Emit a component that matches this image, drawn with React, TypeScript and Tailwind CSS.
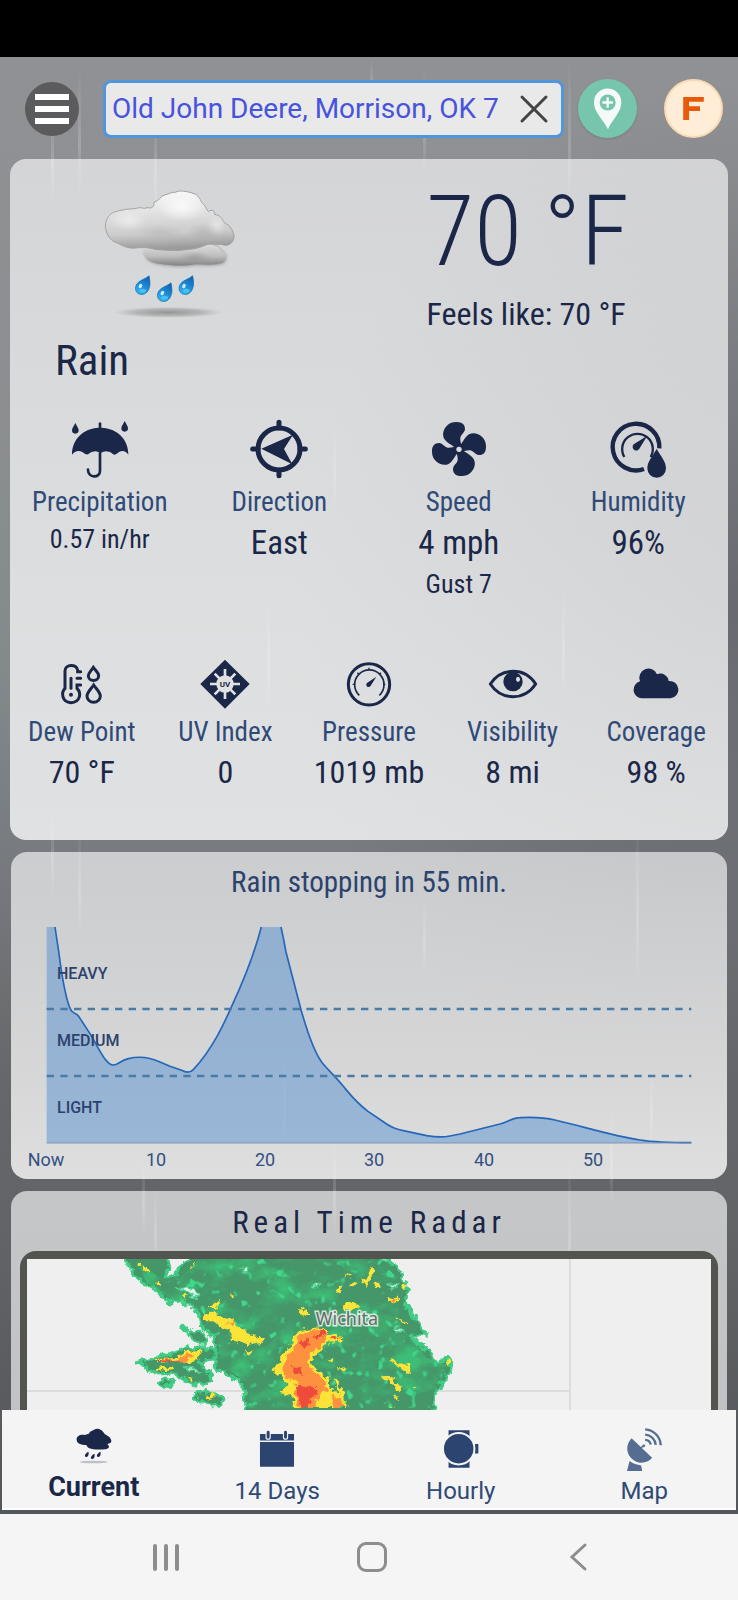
import type { ReactNode } from "react";

const condensed = "font-['Roboto_Condensed','Liberation_Sans_Narrow',Roboto,sans-serif]";

const streaks = [
  { x: 52, y: 40, h: 110 },
  { x: 79, y: 10, h: 130 },
  { x: 155, y: 50, h: 110 },
  { x: 371, y: 0, h: 60 },
  { x: 424, y: 10, h: 110 },
  { x: 569, y: 0, h: 150 },
  { x: 334, y: 370, h: 80 },
  { x: 268, y: 540, h: 110 },
  { x: 563, y: 530, h: 110 },
  { x: 52, y: 750, h: 90 },
  { x: 79, y: 770, h: 110 },
  { x: 637, y: 760, h: 170 },
  { x: 424, y: 840, h: 80 },
  { x: 284, y: 1000, h: 90 },
  { x: 651, y: 1010, h: 80 },
  { x: 143, y: 1100, h: 80 },
  { x: 155, y: 1130, h: 80 },
  { x: 334, y: 1080, h: 100 },
  { x: 569, y: 1090, h: 180 },
  { x: 611, y: 1050, h: 100 },
];

function RainBackdrop() {
  return (
    <div className="absolute inset-0 overflow-hidden bg-[linear-gradient(180deg,#909195_0%,#8b8f92_25%,#84898c_42%,#777b7f_55%,#66676a_70%,#626467_80%,#53565a_100%)]">
      <div className="absolute inset-0 bg-[radial-gradient(ellipse_60%_36%_at_100%_38%,#57585da6,#57585d00)]" />
      <svg className="absolute inset-0 h-full w-full" aria-hidden="true">
        <defs>
          <linearGradient id="streak" x1="0" y1="0" x2="0" y2="1">
            <stop offset="0" stopColor="#fff" stopOpacity="0" />
            <stop offset="0.6" stopColor="#fff" stopOpacity="0.18" />
            <stop offset="1" stopColor="#fff" stopOpacity="0" />
          </linearGradient>
        </defs>
        {streaks.map((s) => (
          <rect key={`${s.x}-${s.y}`} x={s.x - 1} y={s.y} width="3" height={s.h} fill="url(#streak)" />
        ))}
      </svg>
    </div>
  );
}

function RainCloud() {
  return (
    <svg viewBox="300 410 420 400" className="h-[133px] w-[140px]" aria-hidden="true">
      <defs>
        <linearGradient id="cloudTop" x1="0" y1="0" x2="0.1" y2="1">
          <stop offset="0" stopColor="#fbfbfb" />
          <stop offset="0.45" stopColor="#dedede" />
          <stop offset="0.75" stopColor="#cbcbcb" />
          <stop offset="1" stopColor="#9a9a9a" />
        </linearGradient>
        <linearGradient id="cloudLow" x1="0" y1="0" x2="0" y2="1">
          <stop offset="0" stopColor="#dcdcdc" />
          <stop offset="0.55" stopColor="#bdbdbd" />
          <stop offset="1" stopColor="#838383" />
        </linearGradient>
        <radialGradient id="puff">
          <stop offset="0" stopColor="#fff" stopOpacity="0.8" />
          <stop offset="1" stopColor="#fff" stopOpacity="0" />
        </radialGradient>
        <radialGradient id="shade">
          <stop offset="0" stopColor="#8e8e8e" stopOpacity="0.55" />
          <stop offset="1" stopColor="#8e8e8e" stopOpacity="0" />
        </radialGradient>
        <radialGradient id="ground">
          <stop offset="0" stopColor="#777" stopOpacity="0.7" />
          <stop offset="0.6" stopColor="#888" stopOpacity="0.45" />
          <stop offset="1" stopColor="#999" stopOpacity="0" />
        </radialGradient>
        <linearGradient id="drop" x1="0.8" y1="0" x2="0.3" y2="1">
          <stop offset="0" stopColor="#0d5fae" />
          <stop offset="0.5" stopColor="#1e88d2" />
          <stop offset="1" stopColor="#2fb4ee" />
        </linearGradient>
        <filter id="soft" x="-10%" y="-10%" width="120%" height="120%">
          <feGaussianBlur stdDeviation="5" />
        </filter>
      </defs>
      <ellipse cx="505" cy="787" rx="165" ry="17" fill="url(#ground)" />
      <path
        d="M432 604C434 628 452 640 480 644C520 652 560 650 590 645C620 646 655 648 672 640C684 628 682 612 668 604C655 586 640 582 622 584C590 596 560 600 540 598Z"
        fill="#666"
        opacity=".5"
        filter="url(#soft)"
      />
      <path
        d="M432 600C430 622 446 636 474 640C516 648 560 648 588 642C620 644 652 645 668 638C682 626 680 612 667 604C656 588 638 582 622 584C590 592 560 598 540 598C500 596 465 592 432 600Z"
        fill="url(#cloudLow)"
      />
      <ellipse cx="585" cy="622" rx="50" ry="18" fill="url(#shade)" />
      <path
        d="M316 520C322 496 332 490 346 484C352 486 356 478 366 480C378 474 396 478 410 474C420 468 430 478 444 472C456 476 464 468 462 456C478 452 480 438 494 434C508 432 514 424 526 426C540 418 562 424 576 428C596 432 600 446 606 458C618 464 618 478 626 484C636 474 646 484 644 492C660 494 668 506 674 518C690 524 700 540 703 558C702 578 684 592 664 582C650 584 638 580 624 582C606 590 588 596 566 598C530 604 496 600 466 598C440 590 420 592 400 594C372 594 356 578 340 574C322 560 314 540 316 520Z"
        fill="url(#cloudTop)"
        stroke="#a2a2a2"
        strokeWidth="3"
      />
      <ellipse cx="545" cy="470" rx="75" ry="45" fill="url(#puff)" />
      <ellipse cx="385" cy="512" rx="55" ry="30" fill="url(#puff)" opacity=".6" />
      <ellipse cx="650" cy="525" rx="30" ry="30" fill="url(#puff)" opacity=".5" />
      <ellipse cx="480" cy="545" rx="70" ry="25" fill="url(#shade)" opacity=".35" />
      <ellipse cx="610" cy="545" rx="50" ry="28" fill="url(#shade)" opacity=".45" />
      {[
        [0, 0],
        [66, 21],
        [131, 0],
      ].map(([dx, dy]) => (
        <g key={dx} transform={`translate(${dx} ${dy})`}>
          <path
            d="M447 677C450 692 452 706 446 718C440 731 428 736 418 732C406 728 403 714 410 702C418 690 438 686 447 677Z"
            fill="url(#drop)"
            stroke="#1468ad"
            strokeWidth="2"
          />
          <ellipse cx="421" cy="708" rx="5" ry="7" fill="#c8ecff" transform="rotate(30 421 708)" />
          <ellipse cx="428" cy="722" rx="10" ry="6" fill="#59d0f8" opacity=".7" />
        </g>
      ))}
    </svg>
  );
}

function UmbrellaIcon() {
  return (
    <svg viewBox="208 58 180 180" className="size-[60px]" fill="#1b2748" aria-hidden="true">
      <path d="M214 165C214 118 248 86 294 84V70Q298 66 302 70V84C350 86 383 118 383 165Q371 148 354 158Q346 166 340 165Q320 148 300 160Q280 148 262 164Q254 166 246 158Q228 148 214 165Z" />
      <path d="M298 160V214C298 236 262 236 262 210" fill="none" stroke="#1b2748" strokeWidth="8" strokeLinecap="round" />
      <path d="M224 70C229 80 234 86 234 92A10 10 0 0 1 214 92C214 86 219 80 224 70Z" />
      <path d="M372 64C377 74 382 80 382 86A10 10 0 0 1 362 86C362 80 367 74 372 64Z" />
    </svg>
  );
}

function CompassIcon() {
  return (
    <svg viewBox="747 58 180 180" className="size-[60px]" fill="#1b2748" aria-hidden="true">
      <circle cx="837" cy="148" r="63" fill="none" stroke="#1b2748" strokeWidth="15" />
      <path d="M837 68V84M837 212V228M758 148H774M900 148H916" stroke="#1b2748" strokeWidth="15" strokeLinecap="round" />
      <path d="M784 147L879 105L852 148L877 194Z" />
    </svg>
  );
}

function FanIcon() {
  return (
    <svg viewBox="183 58 180 180" className="size-[60px]" fill="#1b2748" aria-hidden="true">
      {[0, 90, 180, 270].map((deg) => (
        <path
          key={deg}
          transform={`rotate(${deg} 273 148)`}
          d="M264 147C256 137 238 132 229 118C218 98 234 68 263 67C283 66 291 75 291 88C290 100 279 104 277 114C276 123 279 131 282 141C274 135 266 138 264 147Z"
        />
      ))}
      <circle cx="273" cy="148" r="14" />
      <circle cx="273" cy="149" r="8" fill="#dcdddd" />
    </svg>
  );
}

function HumidityIcon() {
  return (
    <svg viewBox="722 58 180 180" className="size-[60px]" fill="none" stroke="#1b2748" aria-hidden="true">
      <path d="M830 208A70 70 0 1 1 876 146" strokeWidth="13" />
      <path d="M771 172A46 46 0 1 1 850 172" strokeWidth="7" />
      <path d="M840 108L817 146A11 11 0 1 1 799 134Z" fill="#1b2748" stroke="none" />
      <path d="M868 148C882 172 896 186 896 206A28 28 0 0 1 840 206C840 186 854 172 868 148Z" fill="#1b2748" stroke="none" />
    </svg>
  );
}

function DewPointIcon() {
  return (
    <svg viewBox="170 60 150 150" className="size-[50px]" fill="none" stroke="#1b2748" strokeWidth="9" strokeLinecap="round" aria-hidden="true">
      <path d="M241 98H232V94C230 74 194 74 194 96V148C182 160 184 190 212 191C240 190 244 162 230 148V138H241M230 118H241" />
      <path d="M212 118V148" strokeWidth="9" />
      <circle cx="212" cy="167" r="6" fill="#1b2748" stroke="none" />
      <path d="M279 85C287 96 295 102 295 110A15 14 0 0 1 264 110C264 102 272 96 279 85Z" />
      <path d="M280 138C288 150 300 160 300 171A20 19 0 0 1 260 171C260 160 272 150 280 138Z" />
    </svg>
  );
}

function UvIcon() {
  return (
    <svg viewBox="599 60 150 150" className="size-[50px]" aria-hidden="true">
      <path d="M674 62L748 135L674 209L600 135Z" fill="#1b2748" />
      <path d="M674 90V180M629 135H719M643 104L705 166M705 104L643 166" stroke="#e0e1e1" strokeWidth="8" />
      <circle cx="674" cy="135" r="26" fill="#e0e1e1" />
      <text x="674" y="143" textAnchor="middle" className="fill-[#1b2748] font-[Roboto,sans-serif] text-[24px] font-bold">UV</text>
    </svg>
  );
}

function PressureIcon() {
  return (
    <svg viewBox="1030 60 150 150" className="size-[50px]" fill="none" stroke="#1b2748" aria-hidden="true">
      <circle cx="1105" cy="136" r="62" strokeWidth="9" />
      <path d="M1076 169A44 44 0 1 1 1136 169" strokeWidth="5" />
      <path d="M1063 136H1056M1147 136H1154M1075 106L1070 101M1136 106L1141 101M1105 92V86" strokeWidth="4" />
      <path d="M1127 113L1110 140A7 7 0 1 1 1100 131Z" fill="#1b2748" stroke="none" />
    </svg>
  );
}

function EyeIcon() {
  return (
    <svg viewBox="357 60 150 150" className="size-[50px]" aria-hidden="true">
      <path
        d="M364 135C382 108 406 97 432 97S482 108 500 135C482 162 458 173 432 173S382 162 364 135Z"
        fill="none"
        stroke="#1b2748"
        strokeWidth="9"
        strokeLinejoin="round"
      />
      <circle cx="432" cy="128" r="29" fill="#1b2748" />
      <ellipse cx="447" cy="121" rx="6" ry="8" fill="#e0e1e1" />
    </svg>
  );
}

function CloudIcon() {
  return (
    <svg viewBox="789 60 150 150" className="size-[50px]" fill="#1b2748" aria-hidden="true">
      <path d="M820 178A26 26 0 0 1 816 127A27 27 0 0 1 867 106A25 25 0 0 1 902 126A26 26 0 0 1 908 178Z" />
    </svg>
  );
}

type Reading = { label: string; value: string; note?: string; small?: boolean; icon: ReactNode };

const primary: Reading[] = [
  { label: "Precipitation", value: "0.57 in/hr", small: true, icon: <UmbrellaIcon /> },
  { label: "Direction", value: "East", icon: <CompassIcon /> },
  { label: "Speed", value: "4 mph", note: "Gust 7", icon: <FanIcon /> },
  { label: "Humidity", value: "96%", icon: <HumidityIcon /> },
];

const secondary: Reading[] = [
  { label: "Dew Point", value: "70 °F", icon: <DewPointIcon /> },
  { label: "UV Index", value: "0", icon: <UvIcon /> },
  { label: "Pressure", value: "1019 mb", icon: <PressureIcon /> },
  { label: "Visibility", value: "8 mi", icon: <EyeIcon /> },
  { label: "Coverage", value: "98 %", icon: <CloudIcon /> },
];

function Header() {
  return (
    <header className="flex items-center px-4 pt-[22px] pr-[15px] pb-[21px] sm:pl-[25px]">
      <button type="button" aria-label="Menu" className="flex size-[54px] shrink-0 flex-col items-center justify-center gap-1.5 rounded-full bg-[#5b5b5d]">
        <span className="h-1.5 w-[34px] bg-white" />
        <span className="h-1.5 w-[34px] bg-white" />
        <span className="h-1.5 w-[34px] bg-white" />
      </button>
      <div className="ml-6 flex h-[58px] min-w-0 flex-1 items-center rounded-lg border-[3px] border-[#4f96dc] bg-[#e9e9ea] pr-3 pl-1.5">
        <input
          type="text"
          aria-label="Location"
          defaultValue="Old John Deere, Morrison, OK 7"
          className="min-w-0 flex-1 bg-transparent font-[Roboto,sans-serif] text-[28px] text-[#4853dc] outline-none"
        />
        <button type="button" aria-label="Clear" className="ml-3 shrink-0">
          <svg viewBox="0 0 30 30" className="size-[30px]" stroke="#444" strokeWidth="3" strokeLinecap="round" aria-hidden="true">
            <path d="M3 3L27 27M27 3L3 27" />
          </svg>
        </button>
      </div>
      <button type="button" aria-label="Add location" className="ml-3.5 flex size-[59px] shrink-0 items-center justify-center rounded-full bg-[#78c5ae] shadow-sm">
        <svg viewBox="672 110 90 128" className="h-[43px] w-[30px]" aria-hidden="true">
          <path d="M717 236C702 205 675 186 675 155A41 41 0 0 1 757 155C757 186 730 205 717 236Z" fill="#f4faf8" />
          <circle cx="716" cy="156" r="24" fill="#78c5ae" />
          <path d="M716 140V172M700 156H732" stroke="#f4faf8" strokeWidth="7" />
        </svg>
      </button>
      <button
        type="button"
        aria-label="Switch to Fahrenheit"
        className="ml-[27px] flex size-[59px] shrink-0 items-center justify-center rounded-full border-2 border-[#f8d9b1] bg-[#ffedd8]"
      >
        <svg viewBox="0 0 60 67" className="h-[23px] w-[21px]" fill="#e8590c" aria-hidden="true">
          <path d="M0 0H60V14H17V27H49V41H17V67H0Z" />
        </svg>
      </button>
    </header>
  );
}

function CurrentCard() {
  return (
    <section className="rounded-2xl bg-linear-to-b from-white/62 to-white/77 pb-[50px] text-[#1b2748]">
      <div className="flex justify-between">
        <div className="pt-7 pl-[45px]">
          <div className="pl-[45px]">
            <RainCloud />
          </div>
          <h1 className="mt-[15px] text-[43px] leading-[50px]">Rain</h1>
        </div>
        <div className="flex flex-col items-start pt-[18px] pr-[99px]">
          <p className="text-[98px] leading-[110px] font-light">70 °F</p>
          <p className="mt-[9px] text-[32px] leading-9">Feels like: 70 °F</p>
        </div>
      </div>
      <div className="mt-[34px] grid grid-cols-4 text-center">
        {primary.map((r) => (
          <div key={r.label} className="flex flex-col items-center">
            {r.icon}
            <p className="mt-2 text-[27px] leading-[30px] text-[#2f4a77]">{r.label}</p>
            <p className={r.small ? "mt-[7px] text-[26px] leading-[30px]" : "mt-1.5 text-[33px] leading-10"}>{r.value}</p>
            {r.note && <p className="mt-1.5 text-[26px] leading-[30px]">{r.note}</p>}
          </div>
        ))}
      </div>
      <div className="mt-[60px] grid grid-cols-5 text-center">
        {secondary.map((r) => (
          <div key={r.label} className="flex flex-col items-center">
            {r.icon}
            <p className="mt-2 text-[27px] leading-[30px] text-[#2f4a77]">{r.label}</p>
            <p className="mt-[7px] text-[32px] leading-9 whitespace-nowrap">{r.value}</p>
          </div>
        ))}
      </div>
    </section>
  );
}

const levels = [
  { label: "HEAVY", y: 67 },
  { label: "MEDIUM", y: 134 },
  { label: "LIGHT", y: 201 },
];

const ticks = [
  { label: "Now", x: 35 },
  { label: "10", x: 145 },
  { label: "20", x: 254 },
  { label: "30", x: 363 },
  { label: "40", x: 473 },
  { label: "50", x: 582 },
];

const rise =
  "L176 310C185 380 195 450 212 485C218 498 228 493 236 505L272 560C295 600 318 651 340 651C354 651 360 638 385 632C420 623 450 628 480 642L510 655L545 667C558 674 570 676 580 665C640 600 675 520 695 475C730 400 765 310 784 237";
const fall =
  "L850 270L858 312L903 485C920 545 940 610 967 645C990 672 1010 690 1030 715C1055 745 1070 765 1104 790L1160 828C1180 842 1195 845 1210 848L1280 863C1310 868 1330 868 1350 864L1380 858L1500 828C1530 818 1540 809 1560 809C1600 807 1640 810 1665 816C1750 835 1830 862 1920 876C1960 882 2020 884 2074 884";

function RainChart() {
  return (
    <svg viewBox="0 0 716 260" className="block w-full" role="img" aria-label="Rain intensity for the next hour">
      <g transform="scale(.33333) translate(-33 -192)">
        <path d={`M140 237H165${rise}H843${fall}L2074 885H140Z`} fill="#3f83cf" fillOpacity=".42" />
        <path d={`M165 237${rise}M843 237${fall}`} fill="none" stroke="#2467b8" strokeWidth="5" />
        <path d="M140 885H2074" stroke="#7d93b5" strokeWidth="3" />
        <path d="M140 483H2074M140 684H2074" stroke="#4a7ba3" strokeWidth="7" strokeDasharray="22 19" />
      </g>
      {levels.map((l) => (
        <text key={l.label} x="46" y={l.y} className="fill-[#2b426d] font-[Roboto,sans-serif] text-[16px] font-medium">
          {l.label}
        </text>
      ))}
      {ticks.map((t) => (
        <text key={t.label} x={t.x} y="254" textAnchor="middle" className="fill-[#33507f] font-[Roboto,sans-serif] text-[18px]">
          {t.label}
        </text>
      ))}
    </svg>
  );
}

function RadarMap() {
  return (
    <svg viewBox="0 0 684 450" preserveAspectRatio="xMidYMin slice" className="block h-[450px] w-full bg-[#efefef]" role="img" aria-label="Radar over Wichita">
      <defs>
        <filter id="ragged" x="0" y="0" width="100%" height="100%" colorInterpolationFilters="sRGB">
          <feTurbulence type="fractalNoise" baseFrequency="0.16" numOctaves="3" seed="4" result="n" />
          <feDisplacementMap in="SourceGraphic" in2="n" scale="9" xChannelSelector="R" yChannelSelector="G" />
        </filter>
        <filter id="mottle" x="0" y="0" width="100%" height="100%" colorInterpolationFilters="sRGB">
          <feTurbulence type="fractalNoise" baseFrequency="0.03 0.045" numOctaves="4" seed="11" />
          <feColorMatrix values="0 0 0 0 0.24  0 0 0 0 0.74  0 0 0 0 0.46  3 0 0 0 -1.35" result="light" />
          <feComposite in="light" in2="SourceGraphic" operator="in" />
        </filter>
        <filter id="flecks" x="0" y="0" width="100%" height="100%" colorInterpolationFilters="sRGB">
          <feTurbulence type="fractalNoise" baseFrequency="0.1" numOctaves="2" seed="23" />
          <feColorMatrix values="0 0 0 0 0.25  0 0 0 0 0.85  0 0 0 0 0.55  0 7 0 0 -4.5" result="light" />
          <feComposite in="light" in2="SourceGraphic" operator="in" />
        </filter>
      </defs>
      <path d="M0 132H542M543 0V450" stroke="#dcdcdc" strokeWidth="2" />
      <g filter="url(#ragged)">
        <g transform="scale(.33333) translate(-81 -243)">
          <g fill="#459669" stroke="#40cc84" strokeWidth="9" strokeLinejoin="round">
            <path d="M365 225L390 270L410 300L432 318L462 330L485 355L512 375L538 362L562 380L588 395L598 420L606 452L636 468L646 500L655 520L640 545L648 572L692 592L720 612L732 640L735 690L728 900H1240L1304 690L1308 640L1334 610L1352 575L1358 548L1336 540L1308 556L1290 520L1262 500L1228 475L1282 474L1258 440L1232 402L1212 365L1228 335L1206 300L1192 265L1164 248L1160 225H600L555 252L535 268L528 292L490 294L510 268L495 225Z" />
            <path d="M565 462L600 460L622 478L612 500L580 490ZM415 550L450 545L530 520L560 510L602 508L652 518L640 545L600 552L632 590L632 612L585 618L545 602L520 585L470 588L440 570ZM472 612L495 598L518 610L508 625L485 625ZM578 654L612 640L640 645L675 660L662 682L635 685L610 670L590 666ZM543 448L560 444L556 456Z" />
          </g>
        </g>
      </g>
      {["url(#mottle)", "url(#flecks)"].map((f) => (
        <g key={f} filter={f}>
          <path
            transform="scale(.33333) translate(-81 -243)"
            d="M405 243L440 315L520 365L605 400L650 480L665 560L750 620L745 690H1290L1340 560L1280 540L1200 440L1190 300L1140 243H600L540 300L480 300Z"
          />
        </g>
      ))}
      <g filter="url(#ragged)">
        <g transform="scale(.33333) translate(-81 -243)">
          <path
            d="M535 330L570 328L600 350L590 358L560 345ZM722 272L740 268L745 280L728 284ZM1165 318L1195 322L1180 332ZM1185 448L1212 458L1190 462ZM555 570L590 572L600 582L570 580ZM940 320L960 318L950 332ZM1135 238L1165 240L1150 250Z"
            fill="#e6f5ec"
            stroke="#52d091"
            strokeWidth="6"
          />
          <g fill="#fbe337">
            <path d="M615 410L640 405L665 420L700 425L715 445L745 465L770 478L798 476L785 495L750 500L720 492L690 485L695 468L665 450L640 430L618 430Z" />
            <path d="M620 390L640 382L655 365L660 375L648 392ZM686 352L702 352L698 362ZM740 515L762 518L748 530ZM413 254L424 254L424 266L413 266ZM430 270L446 270L446 280L434 280ZM470 312L478 312L478 320L470 320ZM570 258L582 258L580 266ZM545 355L556 355L554 364ZM900 390L925 395L932 415L905 412ZM468 543L530 540L560 518L608 516L595 550L560 552L545 548L468 556ZM465 570L520 566L518 574L466 580ZM630 640L645 655L622 662ZM562 598L578 598L574 606Z" />
            <path d="M842 540L862 520L880 480L905 455L955 448L985 465L1030 475L1015 492L985 490L968 515L948 530L935 545L940 570L985 600L1000 640L1030 655L1042 690H885L875 650L842 645L862 620L855 600L818 578Z" />
            <path d="M1030 375L1058 375L1075 390L1048 402L1030 395ZM1000 340L1012 330L1030 325L1020 342ZM1045 325L1070 312L1065 328ZM1030 298L1050 288L1055 294ZM1090 310L1104 290L1116 262L1122 275L1112 300L1098 322ZM1122 308L1138 312L1138 330L1125 330ZM1205 318L1225 322L1220 332L1208 332ZM1158 358L1195 360L1190 374L1165 368ZM1188 418L1210 424L1222 440L1208 436ZM1174 545L1200 552L1228 562L1236 585L1210 578L1190 565ZM1338 548L1354 546L1350 566L1340 562ZM1145 592L1165 590L1185 600L1180 620L1210 625L1195 640L1175 625L1168 605L1148 602ZM1175 655L1196 655L1190 664ZM1158 685L1180 685L1180 690ZM1238 628L1255 628L1250 636ZM982 545L1000 540L995 555ZM1010 570L1035 572L1030 582ZM1002 600L1015 605L1012 625L1032 630L1028 655L1010 640Z" />
          </g>
          <g fill="#fd9140">
            <path d="M855 545L875 525L890 485L915 462L955 455L985 468L965 505L935 525L925 545L932 575L970 600L985 635L965 648L950 665L940 690H900L885 650L892 620L865 600L850 575ZM990 650L1020 660L1032 690H1005ZM470 546L530 546L565 525L580 530L550 550L470 553ZM680 435L705 430L700 445ZM995 478L1025 476L1010 488ZM1170 362L1190 364L1185 371Z" />
          </g>
          <g fill="#ee4b3b">
            <path d="M895 495L915 480L932 488L915 510ZM940 468L970 462L978 472L950 482ZM872 560L900 572L908 590L880 582ZM890 620L915 628L945 630L948 650L930 665L925 690H905L895 655ZM472 548L530 548L530 552L472 552ZM1000 480L1018 480L1010 486Z" />
          </g>
        </g>
      </g>
      <text
        x="320"
        y="66"
        textAnchor="middle"
        className="fill-[#666c69] stroke-white/75 stroke-[3px] font-['Noto_Sans',sans-serif] text-[18px] [paint-order:stroke]"
      >
        Wichita
      </text>
    </svg>
  );
}

function TabRainIcon() {
  return (
    <svg viewBox="225 82 114 114" className="size-[38px]" fill="#1b2748" aria-hidden="true">
      <path d="M230 122C228 110 240 104 254 106C262 102 266 106 270 96C280 92 286 86 294 87C306 90 310 96 314 103C324 108 334 116 334 124C334 132 326 130 322 134C330 140 328 148 316 149C300 150 280 151 268 146C260 142 262 138 258 136C246 136 232 134 230 122Z" />
      <path d="M265 156C268 164 264 172 258 172C250 168 258 160 265 156ZM283 162C286 170 282 178 276 178C268 174 276 166 283 162ZM301 156C304 164 300 172 294 172C286 168 294 160 301 156Z" />
      <ellipse cx="281" cy="187" rx="42" ry="4" opacity=".25" />
    </svg>
  );
}

function CalendarIcon() {
  return (
    <svg viewBox="774 90 116 116" className="size-[38px]" fill="#2b4570" aria-hidden="true">
      <path d="M780 102H884V122H780ZM780 127H884V202H780Z" />
      <path d="M805 97V112M858 97V112" stroke="#f4f4f4" strokeWidth="16" strokeLinecap="round" />
      <path d="M805 97V112M858 97V112" stroke="#2b4570" strokeWidth="9" strokeLinecap="round" />
    </svg>
  );
}

function WatchIcon() {
  return (
    <svg viewBox="220 92 116 116" className="size-[38px]" fill="#2b4570" aria-hidden="true">
      <path d="M240 93H304V207H240ZM320 135H331V164H320Z" />
      <circle cx="271" cy="149" r="48" stroke="#f4f4f4" strokeWidth="6" />
    </svg>
  );
}

function DishIcon() {
  return (
    <svg viewBox="764 84 130 130" className="size-[43px]" fill="#566d92" aria-hidden="true">
      <path d="M790 115L852 174C835 194 805 194 787 173C772 155 774 132 790 115Z" />
      <path d="M784 184C794 192 806 196 819 197L822 214H776Z" />
      <path d="M818 144L826 138" stroke="#566d92" strokeWidth="4" />
      <circle cx="827" cy="138" r="4" />
      <path d="M831 88A50 50 0 0 1 878 136M831 104A34 34 0 0 1 863 135M831 120A18 18 0 0 1 848 134" fill="none" stroke="#566d92" strokeWidth="7" />
    </svg>
  );
}

function TabBar() {
  return (
    <nav className="mx-0.5 mb-1 grid h-[100px] shrink-0 grid-cols-4 border-b-2 border-white bg-[#f4f4f4] font-[Roboto,sans-serif] text-[24px] leading-7 text-[#2f4a77]">
      <a href="#current" className="flex flex-col items-center pt-[17px] text-[27px] font-bold text-[#1b2748]">
        <TabRainIcon />
        <span className="mt-2">Current</span>
      </a>
      <a href="#days" className="flex flex-col items-center pt-5">
        <CalendarIcon />
        <span className="mt-[9px]">14 Days</span>
      </a>
      <a href="#hourly" className="flex flex-col items-center pt-5">
        <WatchIcon />
        <span className="mt-[9px]">Hourly</span>
      </a>
      <a href="#map" className="flex flex-col items-center pt-[18px]">
        <DishIcon />
        <span className="mt-1.5">Map</span>
      </a>
    </nav>
  );
}

function SystemBar() {
  return (
    <div className="relative grid h-[86px] shrink-0 grid-cols-[1fr_80px_1fr] items-center bg-[#f5f5f5] pr-[118px] pl-[124px] text-[#8d8d8d]">
      <button type="button" aria-label="Recent apps" className="w-20">
        <svg viewBox="0 0 80 30" className="h-[30px] w-20" stroke="currentColor" strokeWidth="4" strokeLinecap="round" aria-hidden="true">
          <path d="M31 4V27M42 4V27M53 4V27" />
        </svg>
      </button>
      <button type="button" aria-label="Home" className="flex justify-center">
        <span className="size-[30px] rounded-[9px] border-[3px] border-current" />
      </button>
      <button type="button" aria-label="Back" className="w-20 justify-self-end">
        <svg viewBox="0 0 80 30" className="h-[30px] w-20" fill="none" stroke="currentColor" strokeWidth="3" strokeLinecap="round" aria-hidden="true">
          <path d="M45 3L32 15L45 27" />
        </svg>
      </button>
    </div>
  );
}

export default function App() {
  return (
    <div className={`relative flex h-screen flex-col ${condensed}`}>
      <div className="relative z-10 h-[57px] shrink-0 bg-black" />
      <div className="relative flex min-h-0 flex-1 flex-col">
        <RainBackdrop />
        <div className="relative flex min-h-0 flex-1 flex-col">
          <Header />
          <main className="min-h-0 flex-1 space-y-3 overflow-y-auto px-2.5 [scrollbar-width:none]">
            <CurrentCard />
            <section className="mx-px rounded-2xl bg-linear-to-b from-white/62 to-white/79 pt-3 pb-[7px]">
              <h2 className="text-center text-[29px] leading-9 text-[#2b426d]">Rain stopping in 55 min.</h2>
              <div className="mt-3">
                <RainChart />
              </div>
            </section>
            <section className="mx-px rounded-2xl bg-white/63 px-[9px] pt-3.5 pb-3">
              <h2 className="text-center text-[31px] leading-9 tracking-[5px] text-[#1b2748]">Real Time Radar</h2>
              <div className="mt-2.5 overflow-hidden rounded-t-2xl bg-[#51544f] px-[7px] py-2">
                <RadarMap />
              </div>
            </section>
          </main>
          <TabBar />
        </div>
      </div>
      <SystemBar />
    </div>
  );
}
